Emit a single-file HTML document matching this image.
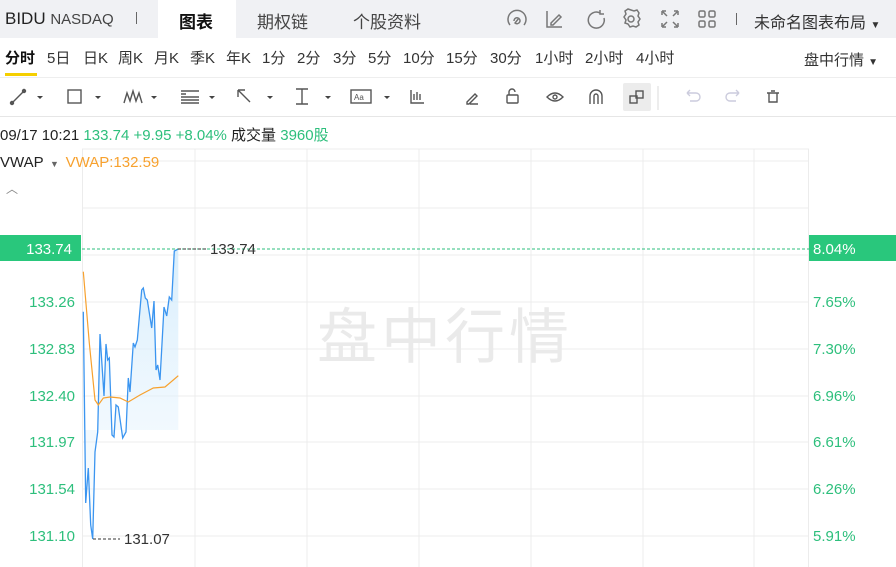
<!DOCTYPE html>
<html><head><meta charset="utf-8"><style>
*{margin:0;padding:0;box-sizing:border-box}
body{width:896px;height:567px;overflow:hidden;background:#fff;font-family:"Liberation Sans","Noto Sans CJK SC",sans-serif;color:#333;position:relative}
.a{position:absolute;white-space:nowrap}
.p{position:absolute;top:47px;font-size:15px;color:#333;white-space:nowrap}
</style></head><body>
<div class="a" style="left:0;top:0;width:896px;height:38px;background:#f0f1f4"></div>
<div class="a" style="left:158px;top:0;width:78px;height:38px;background:#fff"></div>
<div class="a" style="left:5px;top:9px;font-size:17px;color:#222">BIDU <span style="font-size:15px;color:#444">NASDAQ</span></div>
<div class="a" style="left:136px;top:12px;width:1px;height:12px;background:#666"></div>
<div class="a" style="left:179px;top:8px;font-size:17px;font-weight:bold;color:#111">图表</div>
<div class="a" style="left:257px;top:8px;font-size:17px;color:#444">期权链</div>
<div class="a" style="left:353px;top:8px;font-size:17px;color:#444">个股资料</div>
<svg class="a" style="left:500px;top:6px" width="230" height="26" fill="none" stroke="#777" stroke-width="1.5">
<path d="M10 19a9 9 0 1 1 14 0M14 15a3 3 0 1 1 1 2l4-5"/>
<path d="M47 5v16h15M51 17l8-8 2 2-8 8h-2z"/>
<path d="M100 7a8 8 0 1 0 4 5M100 4v4h4"/>
<circle cx="131" cy="13" r="3"/><path d="M131 4l3 1 3-1 2 3-1 3 2 3-2 3 1 3-3 2-3-1-3 1-2-3-3-1 1-3-2-3 2-3-1-3 3-2z"/>
<path d="M162 5h4M162 5v4M178 5h-4M178 5v4M162 21h4M162 21v-4M178 21h-4M178 21v-4M163 6l4 4M177 6l-4 4M163 20l4-4M177 20l-4-4"/>
<rect x="199" y="5" width="6" height="6" rx="1.5"/><rect x="209" y="5" width="6" height="6" rx="1.5"/><rect x="199" y="15" width="6" height="6" rx="1.5"/><rect x="209" y="15" width="6" height="6" rx="1.5"/>
</svg>
<div class="a" style="left:736px;top:13px;width:1px;height:12px;background:#666"></div>
<div class="a" style="left:754px;top:9px;font-size:16px;color:#333">未命名图表布局 <span style="font-size:10px">▼</span></div>

<div class="p" style="left:5px;font-weight:bold;color:#111">分时</div>
<div class="p" style="left:47px">5日</div>
<div class="p" style="left:83px">日K</div>
<div class="p" style="left:118px">周K</div>
<div class="p" style="left:154px">月K</div>
<div class="p" style="left:190px">季K</div>
<div class="p" style="left:226px">年K</div>
<div class="p" style="left:262px">1分</div>
<div class="p" style="left:297px">2分</div>
<div class="p" style="left:333px">3分</div>
<div class="p" style="left:368px">5分</div>
<div class="p" style="left:403px">10分</div>
<div class="p" style="left:446px">15分</div>
<div class="p" style="left:490px">30分</div>
<div class="p" style="left:535px">1小时</div>
<div class="p" style="left:585px">2小时</div>
<div class="p" style="left:636px">4小时</div>
<div class="a" style="left:5px;top:73px;width:32px;height:3px;background:#f5cf00"></div>
<div class="a" style="left:804px;top:49px;font-size:15px;color:#333">盘中行情 <span style="font-size:10px">▼</span></div>
<div class="a" style="left:0;top:77px;width:896px;height:1px;background:#eee"></div>
<div class="a" style="left:0;top:116px;width:896px;height:1px;background:#e6e6e6"></div>
<div class="a" style="left:623px;top:83px;width:28px;height:28px;background:#ececec;border-radius:2px"></div>
<svg class="a" style="left:0;top:80px" width="896" height="34" fill="none" stroke="#555" stroke-width="1.4">
<path d="M12 23l12-12"/><circle cx="12" cy="23" r="1.5" fill="#555"/><circle cx="24" cy="11" r="1.5" fill="#555"/>
<rect x="68" y="10" width="13" height="13"/>
<path d="M124 23l3-10 3 8 3-10 3 10 3-8 3 10"/>
<path d="M181 11h18M181 14h5M181 17h18M181 20h18M181 23h18"/>
<path d="M238 10l12 12M238 10v7M238 10h7"/>
<path d="M296 9h12M296 24h12M302 9v15"/>
<rect x="351" y="10" width="20" height="13"/><text x="354" y="20" font-size="8" fill="#555" stroke="none">Aa</text>
<path d="M411 10v13h13M414 14v6M417 12v8M420 14v6"/>
<path d="M467 22l8-8 2 2-8 8h-2zM470 24h8"/>
<rect x="507" y="15" width="11" height="8" rx="1"/><path d="M509 15v-3a3 3 0 0 1 6 0"/>
<path d="M547 17q8-8 16 0q-8 8-16 0z"/><circle cx="555" cy="17" r="2"/>
<path d="M590 24v-8a6 6 0 0 1 12 0v8M594 24v-8a2 2 0 0 1 4 0v8"/>
<rect x="630" y="16" width="7" height="7"/><rect x="636" y="11" width="7" height="7"/>
<path d="M658 6v24" stroke="#e5e5e5"/>
<path d="M687 13h9a4 4 0 0 1 0 8h-6M687 13l3-3M687 13l3 3" stroke="#ccd"/>
<path d="M739 13h-9a4 4 0 0 0 0 8h6M739 13l-3-3M739 13l-3 3" stroke="#ccd"/>
<path d="M767 13h12M769 13v9h8v-9M771 11h4"/>
</svg>
<svg class="a" style="left:0;top:80px" width="896" height="34" fill="#444"><path d="M37 16h6l-3 3zM95 16h6l-3 3zM151 16h6l-3 3zM209 16h6l-3 3zM267 16h6l-3 3zM325 16h6l-3 3zM384 16h6l-3 3z"/></svg>

<div class="a" style="left:0;top:124px;font-size:15px;color:#222">09/17 10:21 <span style="color:#2dbf7c">133.74 +9.95 +8.04%</span> 成交量 <span style="color:#2dbf7c">3960股</span></div>

<svg class="a" style="left:0;top:140px" width="896" height="427">
<g stroke="#ececec" stroke-width="1">
<path d="M82 9h727M82 21h727M82 68h727M82 115h727M82 162h727M82 209h727M82 256h727M82 302h727M82 349h727M82 396h727"/>
<path d="M82.5 9v418M195 9v418M307 9v418M419 9v418M531 9v418M643 9v418M754 9v418M808.5 9v418"/>
</g>
<text x="445" y="218" text-anchor="middle" font-size="60" fill="#eaeaea" font-family="Noto Sans CJK SC,sans-serif" letter-spacing="4">盘中行情</text>
<defs><linearGradient id="g" x1="0" y1="0" x2="0" y2="1"><stop offset="0" stop-color="#d4ecfc" stop-opacity=".9"/><stop offset="1" stop-color="#eaf5fd" stop-opacity=".2"/></linearGradient></defs>
<path d="M83.3 171.7L85.7 363L88.3 328L90.7 385L92.7 399L95 312L97.7 292L100 194L104 256L106 204L107.7 220L109.3 218L112 295L114 297L116 265L118.3 267L122.7 298L126 292L128.3 238L130 252L133.3 203L135 207L137.3 200L141.7 150L143.3 148L145.3 158L147.3 160L151.7 188L154 161L156 230L157.7 225L160 240L164 167L166.7 176L169.3 157L171.7 160L174.3 111L178.3 109L178.3 290L83.3 290Z" fill="url(#g)"/>
<path d="M83.3 171.7L85.7 363L88.3 328L90.7 385L92.7 399L95 312L97.7 292L100 194L104 256L106 204L107.7 220L109.3 218L112 295L114 297L116 265L118.3 267L122.7 298L126 292L128.3 238L130 252L133.3 203L135 207L137.3 200L141.7 150L143.3 148L145.3 158L147.3 160L151.7 188L154 161L156 230L157.7 225L160 240L164 167L166.7 176L169.3 157L171.7 160L174.3 111L178.3 109" fill="none" stroke="#3b95f0" stroke-width="1.3"/>
<path d="M83.3 131.7L89.3 203L95 260L98.3 265L103.3 258L110 257L120 258L128.3 262L140 255L153.3 248L165 247L173.3 240L178.3 235.7" fill="none" stroke="#f7a12e" stroke-width="1.2"/>
<path d="M82 109H809" stroke="#2dbf7c" stroke-dasharray="3 2"/>
<path d="M178 109h30" stroke="#333" stroke-dasharray="3 2"/>
<text x="210" y="114" font-size="15" fill="#333">133.74</text>
<path d="M93 399h27" stroke="#333" stroke-dasharray="3 2"/>
<text x="124" y="404" font-size="15" fill="#333">131.07</text>
<g font-size="15" fill="#2dbf7c" text-anchor="end">
<text x="75" y="167">133.26</text><text x="75" y="214">132.83</text><text x="75" y="261">132.40</text><text x="75" y="307">131.97</text><text x="75" y="354">131.54</text><text x="75" y="401">131.10</text>
</g>
<g font-size="15" fill="#2dbf7c">
<text x="813" y="167">7.65%</text><text x="813" y="214">7.30%</text><text x="813" y="261">6.96%</text><text x="813" y="307">6.61%</text><text x="813" y="354">6.26%</text><text x="813" y="401">5.91%</text>
</g>
<rect x="0" y="95" width="81" height="26" fill="#29c77c"/>
<text x="72" y="114" font-size="15" fill="#fff" text-anchor="end">133.74</text>
<rect x="809" y="95" width="87" height="26" fill="#29c77c"/>
<text x="813" y="114" font-size="15" fill="#fff">8.04%</text>
</svg>
<div class="a" style="left:0;top:154px;font-size:15px;color:#222">VWAP <span style="font-size:9px;color:#666">&nbsp;▼&nbsp;</span> <span style="color:#f7a12e">VWAP:132.59</span></div>
<div class="a" style="left:6px;top:180px;font-size:12px;color:#888">︿</div>
</body></html>
